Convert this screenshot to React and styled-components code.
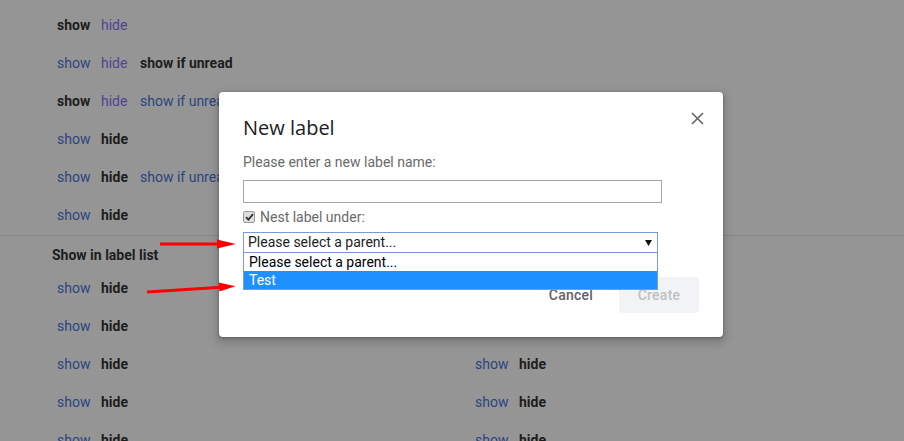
import React from "react";
import styled, { createGlobalStyle } from "styled-components";

const GlobalStyle = createGlobalStyle`
  html, body { margin: 0; padding: 0; }
  body {
    background: #959595;
    font-family: Roboto, "Liberation Sans", Arial, sans-serif;
    font-size: 14px;
    overflow: hidden;
  }
`;

const Page = styled.div`
  position: relative;
  width: 904px;
  height: 441px;
  overflow: hidden;
`;

const SystemSection = styled.div`
  padding-top: 6px;
`;

const Pair = styled.div`
  display: grid;
  grid-template-columns: 44px 39px auto;
  height: 38px;
  line-height: 38px;
  white-space: nowrap;
  padding-left: ${(p) => p.$indent || 0}px;
`;

const colors = {
  bold: "#1d1d1d",
  link: "#2b4480",
  visited: "#4e4590",
};

const Opt = styled.span`
  color: ${(p) => colors[p.$kind]};
  font-weight: ${(p) => (p.$kind === "bold" ? 700 : 400)};
`;

const Divider = styled.hr`
  margin: 1px 0 0;
  border: 0;
  border-top: 1px solid #878787;
`;

const SectionHeader = styled.div`
  padding: 9px 0 4px 52px;
  line-height: 20px;
  font-weight: 700;
  color: #1d1d1d;
`;

const LabelRow = styled.div`
  display: grid;
  grid-template-columns: 418px 1fr;
  padding-left: 57px;
`;

const Dialog = styled.div`
  position: absolute;
  left: 219px;
  top: 92px;
  width: 504px;
  box-sizing: border-box;
  padding: 24px;
  background: #fff;
  border-radius: 4px;
  box-shadow: 0 1px 3px rgba(0, 0, 0, 0.3), 0 4px 8px 3px rgba(0, 0, 0, 0.15);
`;

const DialogHeader = styled.div`
  display: flex;
  justify-content: space-between;
  align-items: flex-start;
`;

const Title = styled.h2`
  margin: 0;
  font-family: "Open Sans", Roboto, sans-serif;
  font-weight: 400;
  font-size: 20px;
  line-height: 24px;
  color: #202124;
`;

const CloseButton = styled.button`
  display: flex;
  padding: 0;
  border: 0;
  background: none;
  margin: -4px -5px 0 0;
  width: 13px;
  height: 13px;
  cursor: pointer;
`;

const FieldLabel = styled.div`
  margin-top: 12px;
  line-height: 20px;
  color: #6a6a6a;
`;

const TextInput = styled.div`
  margin-top: 8px;
  width: 419px;
  height: 23px;
  box-sizing: border-box;
  border: 1px solid #a5a5a5;
`;

const CheckRow = styled.label`
  display: flex;
  align-items: center;
  gap: 5px;
  margin-top: 4px;
  line-height: 20px;
  color: #6a6a6a;
`;

const CheckBox = styled.span`
  display: flex;
  align-items: center;
  justify-content: center;
  width: 12px;
  height: 12px;
  box-sizing: border-box;
  border: 1px solid #9a9a9a;
  border-radius: 2px;
  background: #dedede;
`;

const SelectWrap = styled.div`
  position: relative;
  margin-top: 5px;
  width: 415px;
`;

const SelectBox = styled.div`
  display: flex;
  justify-content: space-between;
  align-items: center;
  height: 21px;
  box-sizing: border-box;
  padding: 0 5px 0 4px;
  border: 1px solid #7b9bd8;
  color: #222;
  line-height: 19px;
`;

const OptionList = styled.div`
  position: absolute;
  left: 0;
  right: 0;
  top: 21px;
  background: #fff;
  border: 1px solid #7b9bd8;
  border-top: 0;
  z-index: 2;
`;

const Option = styled.div`
  height: 18px;
  line-height: 18px;
  padding-left: 5px;
  color: ${(p) => (p.$selected ? "#fff" : "#000")};
  background: ${(p) => (p.$selected ? "#1e90ff" : "#fff")};
`;

const Actions = styled.div`
  display: flex;
  justify-content: flex-end;
  gap: 8px;
  margin-top: 24px;
`;

const Button = styled.button`
  width: 80px;
  height: 36px;
  border: 0;
  border-radius: 4px;
  font-family: Roboto, sans-serif;
  font-size: 14px;
  font-weight: 500;
  letter-spacing: 0.25px;
  background: ${(p) => (p.$disabled ? "#f1f3f4" : "transparent")};
  color: ${(p) => (p.$disabled ? "#bdc1c6" : "#5f6368")};
`;

const Arrows = styled.svg`
  position: absolute;
  left: 0;
  top: 0;
  pointer-events: none;
  z-index: 5;
`;

const systemRows = [
  [["show", "bold"], ["hide", "visited"]],
  [["show", "link"], ["hide", "visited"], ["show if unread", "bold"]],
  [["show", "bold"], ["hide", "visited"], ["show if unread", "link"]],
  [["show", "link"], ["hide", "bold"]],
  [["show", "link"], ["hide", "bold"], ["show if unread", "link"]],
  [["show", "link"], ["hide", "bold"]],
];

const ShowHide = () => (
  <Pair>
    <Opt $kind="link">show</Opt>
    <Opt $kind="bold">hide</Opt>
  </Pair>
);

export default function App() {
  return (
    <Page>
      <GlobalStyle />
      <SystemSection>
        {systemRows.map((row, i) => (
          <Pair key={i} $indent={57}>
            {row.map(([t, k]) => (
              <Opt key={t} $kind={k}>{t}</Opt>
            ))}
          </Pair>
        ))}
      </SystemSection>
      <Divider />
      <SectionHeader>Show in label list</SectionHeader>
      {[0, 1, 2, 3, 4].map((i) => (
        <LabelRow key={i}>
          <ShowHide />
          <ShowHide />
        </LabelRow>
      ))}

      <Dialog>
        <DialogHeader>
          <Title>New label</Title>
          <CloseButton aria-label="Close">
            <svg width="13" height="13" viewBox="0 0 13 13">
              <path d="M1 1L12 12M12 1L1 12" stroke="#5f6368" strokeWidth="1.6" />
            </svg>
          </CloseButton>
        </DialogHeader>
        <FieldLabel>Please enter a new label name:</FieldLabel>
        <TextInput />
        <CheckRow>
          <CheckBox>
            <svg width="9" height="8" viewBox="0 0 9 8">
              <path d="M1 4.2L3.4 6.6L8 1.2" fill="none" stroke="#333" strokeWidth="1.8" />
            </svg>
          </CheckBox>
          Nest label under:
        </CheckRow>
        <SelectWrap>
          <SelectBox>
            <span>Please select a parent...</span>
            <svg width="7" height="6" viewBox="0 0 7 6">
              <path d="M0 0H7L3.5 6Z" fill="#111" />
            </svg>
          </SelectBox>
          <OptionList>
            <Option>Please select a parent...</Option>
            <Option $selected>Test</Option>
          </OptionList>
        </SelectWrap>
        <Actions>
          <Button>Cancel</Button>
          <Button $disabled>Create</Button>
        </Actions>
      </Dialog>

      <Arrows width="904" height="441" viewBox="0 0 904 441">
        <line x1="160" y1="244" x2="220" y2="244" stroke="#f00" strokeWidth="3" />
        <path d="M217 239.5L236 244L217 248.5Z" fill="#f00" />
        <line x1="147" y1="292" x2="221" y2="287.3" stroke="#f00" strokeWidth="3" />
        <path d="M218.7 282.5L235.5 286.3L219.4 291.5Z" fill="#f00" />
      </Arrows>
    </Page>
  );
}
